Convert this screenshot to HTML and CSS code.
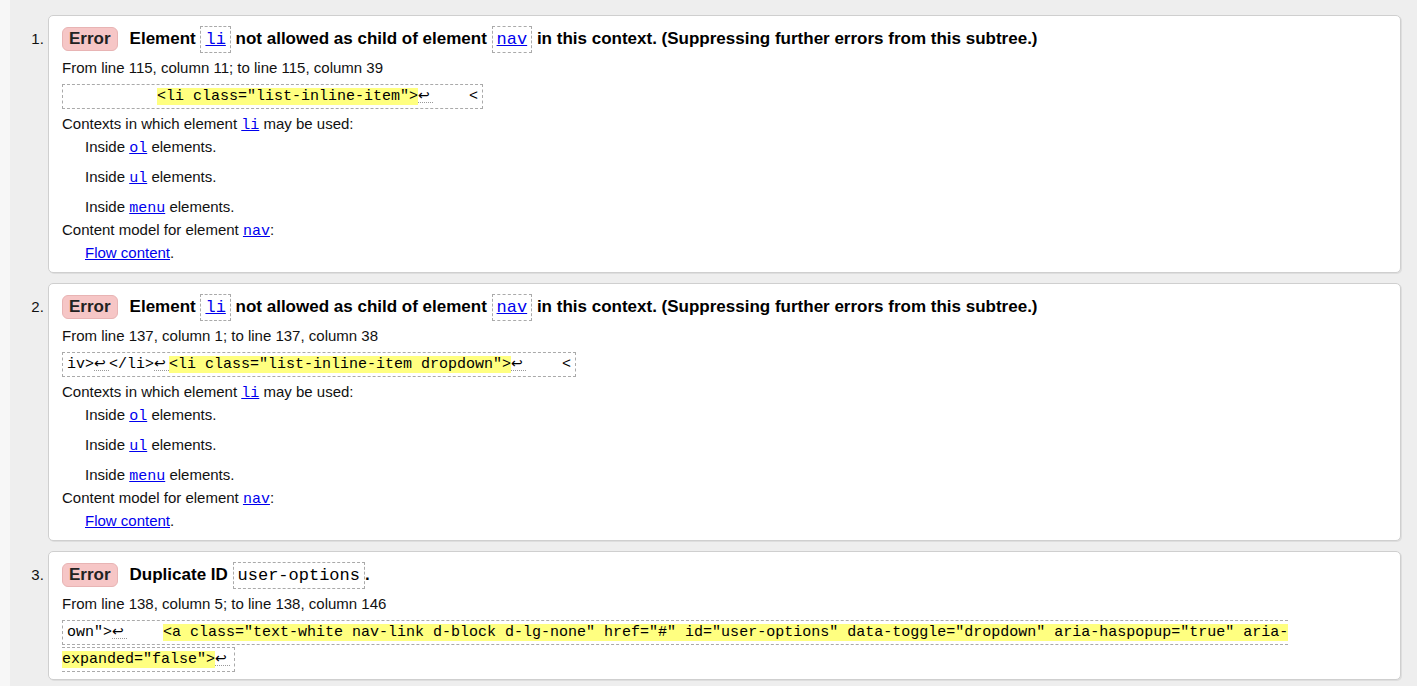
FILE: index.html
```html
<!DOCTYPE html>
<html lang="en">
<head>
<meta charset="utf-8">
<title>Validation results</title>
<link rel="stylesheet" href="styles.css">
</head>
<body>
<div class="page">
<ol class="messages">
  <li class="message">
    <p class="msg"><span class="badge">Error</span><span class="title">Element <code class="tag"><a href="#">li</a></code> not allowed as child of element <code class="tag"><a href="#">nav</a></code> in this context. (Suppressing further errors from this subtree.)</span></p>
    <p class="loc">From line 115, column 11; to line 115, column 39</p>
    <p class="extract"><code>          <b>&lt;li class="list-inline-item"&gt;</b><span class="lf">↩</span>    &lt;</code></p>
    <dl class="details">
      <dt>Contexts in which element <a class="mono" href="#">li</a> may be used:</dt>
      <dd>Inside <a class="mono" href="#">ol</a> elements.</dd>
      <dd>Inside <a class="mono" href="#">ul</a> elements.</dd>
      <dd>Inside <a class="mono" href="#">menu</a> elements.</dd>
      <dt>Content model for element <a class="mono" href="#">nav</a>:</dt>
      <dd class="tight"><a href="#">Flow content</a>.</dd>
    </dl>
  </li>
  <li class="message">
    <p class="msg"><span class="badge">Error</span><span class="title">Element <code class="tag"><a href="#">li</a></code> not allowed as child of element <code class="tag"><a href="#">nav</a></code> in this context. (Suppressing further errors from this subtree.)</span></p>
    <p class="loc">From line 137, column 1; to line 137, column 38</p>
    <p class="extract"><code>iv&gt;<span class="lf">↩</span>&lt;/li&gt;<span class="lf">↩</span><b>&lt;li class="list-inline-item dropdown"&gt;</b><span class="lf">↩</span>    &lt;</code></p>
    <dl class="details">
      <dt>Contexts in which element <a class="mono" href="#">li</a> may be used:</dt>
      <dd>Inside <a class="mono" href="#">ol</a> elements.</dd>
      <dd>Inside <a class="mono" href="#">ul</a> elements.</dd>
      <dd>Inside <a class="mono" href="#">menu</a> elements.</dd>
      <dt>Content model for element <a class="mono" href="#">nav</a>:</dt>
      <dd class="tight"><a href="#">Flow content</a>.</dd>
    </dl>
  </li>
  <li class="message">
    <p class="msg"><span class="badge">Error</span><span class="title">Duplicate ID <code class="tag">user-options</code>.</span></p>
    <p class="loc">From line 138, column 5; to line 138, column 146</p>
    <p class="extract"><code>own"&gt;<span class="lf">↩</span>    <b>&lt;a class="text-white nav-link d-block d-lg-none" href="#" id="user-options" data-toggle="dropdown" aria-haspopup="true" aria-expanded="false"&gt;</b><span class="lf">↩</span></code></p>
  </li>
</ol>
</div>
</body>
</html>
```

FILE: styles.css
```css
html, body {
  margin: 0;
  padding: 0;
}

body {
  background: #f7f7f7;
  font-family: "Liberation Sans", Arial, sans-serif;
  font-size: 15px;
  color: #111;
}

.page {
  margin-left: 10px;
  background: #eeeeee;
  padding: 15px 16px 10px 0;
  min-height: 686px;
  box-sizing: border-box;
}

.messages {
  margin: 0;
  padding: 0 0 0 38px;
  list-style: decimal outside;
}

.message {
  background: #fff;
  border: 1px solid #cfcfcf;
  border-radius: 5px;
  box-shadow: 1px 1px 0 #dedede;
  padding: 10px 13px 8px;
  margin-bottom: 10px;
}

.message::marker {
  font-size: 15px;
  color: #111;
}

.msg {
  margin: 0;
  line-height: 26px;
  font-size: 17px;
}

.badge {
  display: inline-block;
  vertical-align: baseline;
  line-height: 22px;
  padding: 0 6px;
  background: #f6c6c6;
  border: 1px solid #e8b4b4;
  border-radius: 6px;
  font-weight: bold;
  color: #222;
  margin-right: 12px;
}

.title {
  font-weight: bold;
  color: #000;
}

.tag {
  font-family: "Liberation Mono", "Courier New", monospace;
  font-weight: normal;
  font-size: 17px;
  line-height: 1;
  border: 1px dashed #aaa;
  padding: 3px 4px;
  color: #000;
}

a {
  color: #0000ee;
  text-decoration: underline;
}

.loc {
  margin: 4px 0 0;
  line-height: 23px;
}

.extract {
  margin: 2px 0 0;
  line-height: 27px;
}

.extract code {
  font-family: "Liberation Mono", "Courier New", monospace;
  font-size: 15px;
  line-height: 1;
  white-space: pre-wrap;
  border: 1px dashed #aaa;
  padding: 3px 4px;
  color: #000;
}

.extract b {
  font-weight: normal;
  background: #ffff80;
}

.lf {
  display: inline-block;
  width: 15px;
  line-height: 1;
  font-family: "DejaVu Sans", sans-serif;
  font-size: 14px;
  border-bottom: 1px dotted #999;
  box-sizing: border-box;
}

.details {
  margin: 4px 0 0;
  line-height: 23px;
}

.details dt {
  margin: 0;
}

.details dd {
  margin: 0 0 7px 23px;
}

.details dd:nth-of-type(3),
.details dd.tight {
  margin-bottom: 0;
}

.mono {
  font-family: "Liberation Mono", "Courier New", monospace;
  font-size: 15px;
  line-height: 1;
}
```
